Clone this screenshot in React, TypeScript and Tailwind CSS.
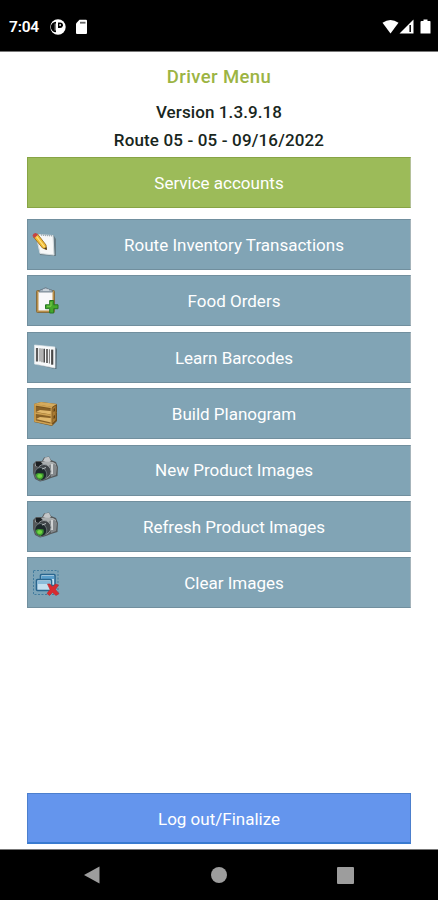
import type { ReactNode } from 'react';

function NotepadIcon() {
  return (
    <svg width="28" height="28" viewBox="0 0 28 28">
      <path d="M5 4 L22 5 L24 8 L24 25 L8 24 Z" fill="#667a83" />
      <path d="M4 3.5 L21 4.5 L22 24 L8 22.5 Z" fill="#f7f8f8" stroke="#d5dcdf" />
      <path d="M9 4 L22 5" stroke="#9ba9b0" strokeWidth="1.5" strokeDasharray="1 1" />
      <path d="M1.5 6 L5.5 3 L14 14 L14.5 18.5 L10.5 17 Z" fill="#f2bd35" stroke="#9c6c20" strokeWidth=".9" />
      <path d="M4.5 5.5 L12.5 16" stroke="#ffe58b" strokeWidth="1.2" />
      <path d="M.5 5 Q1 2 4 2 L6 3.7 L2.5 7 Z" fill="#c64442" />
      <path d="M12 17.3 L14.5 16.3 L14.7 19 Z" fill="#443827" />
    </svg>
  );
}

function ClipboardIcon() {
  return (
    <svg width="28" height="28" viewBox="0 0 28 28">
      <rect x="4.5" y="3.5" width="18" height="22" rx="1" fill="#b9904b" stroke="#836c42" />
      <path d="M6.5 5 H20.5 V23.5 H6.5 Z" fill="#f8f8fa" />
      <path d="M7 5 L8 3 L11 2 Q14 -1 16 2 L20 3 L20.5 5 Z" fill="#a7b3bf" stroke="#637382" strokeWidth=".8" />
      <path d="M11 3 H17" stroke="#e7edf0" />
      <path d="M17.7 13.5 H21.7 V17.8 H26 V21.7 H21.7 V26 H17.7 V21.7 H13.5 V17.8 H17.7 Z" fill="#45a82b" stroke="#267623" strokeWidth="1" />
      <path d="M19 15 V19.2 H15" stroke="#7fd04f" fill="none" />
    </svg>
  );
}

function BarcodeIcon() {
  return (
    <svg width="28" height="28" viewBox="0 0 28 28">
      <path d="M4 3 L24 4.5 L25 7 L24.5 26 L21 25.5 L4 21.5 Z" fill="#586c78" />
      <path d="M2.5 2 L23 4 V25 L2.5 21 Z" fill="#f7f9fa" stroke="#dce4e8" strokeWidth=".7" />
      <path d="M5 5 V18.5" stroke="#5b5b5b" strokeWidth="2.2" />
      <path d="M8 5.3 V18.5 M10 5.5 V19.2" stroke="#858585" strokeWidth="1.2" />
      <path d="M12.2 5.7 V19.5 M15 6 V20" stroke="#4b4b4b" strokeWidth="1.6" />
      <path d="M17.4 6.3 V20.5" stroke="#777" />
      <path d="M20.2 6.6 V21.7" stroke="#484848" strokeWidth="2.2" />
    </svg>
  );
}

function ShelfIcon() {
  return (
    <svg width="28" height="28" viewBox="0 0 28 28">
      <path d="M2 4 L9 2 L25 4 V21 L20 26 L2 22 Z" fill="#73511f" />
      <path d="M2 4 L9 2 L25 4 L20 7 Z" fill="#d5ab5d" />
      <path d="M4 6.5 L19 9 V23.5 L4 20.5 Z" fill="#886127" />
      <path d="M4 12 L8 10 L23 11.5 L19 14.5 Z M4 19 L8 17 L23 18.5 L19 22.5 Z" fill="#e1b86c" />
      <path d="M3 4.7 V21 L19.5 24.5 V7.5 Z M3 13 L19.5 15.5 L24 12" fill="none" stroke="#cfa253" strokeWidth="1.7" />
      <path d="M24 5 V20 L20 24 V8 Z" fill="#a97a32" stroke="#6b4a1d" strokeWidth=".6" />
      <path d="M21.5 9 L23 8 V11 L21.5 12 Z M21.5 16 L23 15 V18 L21.5 19 Z" fill="#624416" />
    </svg>
  );
}

function CameraIcon() {
  return (
    <svg width="28" height="28" viewBox="0 0 28 28">
      <path d="M1 8 L4 5 L10 5 L12 1.5 L17 .5 L19 4 L24 6 L26 11 L25.5 20 L19 22 L14 24 L8 25.5 L3 23 L1 17 Z" fill="#54585a" />
      <path d="M11 5 L13 1.5 L17 .8 L19 5 L16 7 Z" fill="#c3c6c8" />
      <path d="M4 7 L11 5.5 L21 6 L24 8 L24 12 L16 11 L8 12 L3 10 Z" fill="#aaaeaf" />
      <path d="M4 6 L9 6 L11.5 9 L8 12 L4 10 Z" fill="#1b1f22" />
      <path d="M17 9 L23 8 L25 11 L24 19 L19 21 Z" fill="#83888b" />
      <path d="M20 8 V18" stroke="#d0d3d4" strokeWidth="2" />
      <circle cx="12" cy="15.5" r="7" fill="#3e4347" stroke="#969c9f" />
      <ellipse cx="8.8" cy="18" rx="5.9" ry="6.5" transform="rotate(-25 8.8 18)" fill="#1d282b" stroke="#626b70" />
      <path d="M3.5 18.5 Q5 16.5 7 17 L11.5 17.5 Q12.5 22 8.5 24 Q4 22.8 3.5 18.5 Z" fill="#3e9b31" />
      <ellipse cx="7.7" cy="20" rx="2.5" ry="1.9" fill="#72d343" />
      <path d="M10 13 L14 11.5" stroke="#b7bec0" />
    </svg>
  );
}

function ClearIcon() {
  return (
    <svg width="28" height="28" viewBox="0 0 28 28">
      <rect x="1.5" y="1.5" width="24.5" height="24" fill="#68a5ca" fillOpacity=".18" stroke="#437c9e" strokeDasharray="2 1.5" />
      <rect x="8.5" y="5.5" width="14.5" height="11" rx="1" fill="#c8e3f3" stroke="#28658e" strokeWidth="1.6" />
      <path d="M9.5 7 H22 V10 H9.5 Z" fill="#5b9fcb" />
      <rect x="4.5" y="10.5" width="15" height="11" rx="1" fill="#c4dfef" stroke="#28658e" strokeWidth="1.6" />
      <path d="M5.5 12 H18.5 V15 H5.5 Z" fill="#8abbd9" />
      <path d="M15.5 15 L18 15 L20.5 18 L23.5 15 L26.5 16 L23.5 20.5 L27 24.7 L24 26.5 L20.5 23.5 L17.5 26.5 L15 24.5 L18 20.5 Z" fill="#d82b30" stroke="#b92a2d" strokeWidth=".6" />
    </svg>
  );
}

const items: { label: string; icon: ReactNode }[] = [
  { label: 'Route Inventory Transactions', icon: <NotepadIcon /> },
  { label: 'Food Orders', icon: <ClipboardIcon /> },
  { label: 'Learn Barcodes', icon: <BarcodeIcon /> },
  { label: 'Build Planogram', icon: <ShelfIcon /> },
  { label: 'New Product Images', icon: <CameraIcon /> },
  { label: 'Refresh Product Images', icon: <CameraIcon /> },
  { label: 'Clear Images', icon: <ClearIcon /> },
];

function StatusBar() {
  return (
    <header className="flex h-[52px] shrink-0 items-center border-b border-[#777] bg-black pt-[3px] text-white">
      <span className="ml-[9px] w-[41px] pt-px text-[15.5px] font-semibold leading-none tracking-[-0.2px]">7:04</span>
      <svg width="16" height="16" viewBox="0 0 16 16">
        <circle cx="8" cy="8" r="7.7" fill="white" />
        <path d="M6 2.8 A5.2 5.2 0 0 0 6 13.2 Z" fill="black" />
        <path d="M5.2 4.5 V11.5" stroke="white" strokeWidth=".7" />
        <path d="M8 3.5 H10 A3 3 0 0 1 13 6.5 Q12.5 9 10 9 H8 Z" fill="black" />
        <path d="M9.3 5.2 H11 V6.7 H9.3 Z" fill="white" />
      </svg>
      <svg className="ml-[9px]" width="13" height="16" viewBox="0 0 13 16">
        <path d="M4.5 .8 H11 Q12 .8 12 2 V14 Q12 15 11 15 H2 Q1 15 1 14 V4.5 Z" fill="white" />
        <path d="M5 3.7 H10.5" stroke="#666" strokeWidth="1.8" />
      </svg>
      <svg className="ml-auto" width="17" height="16" viewBox="0 0 17 16">
        <path d="M.5 3.8 Q8.5 -2 16.5 3.8 L8.5 14.5 Z" fill="white" />
      </svg>
      <svg width="15" height="16" viewBox="0 0 15 16">
        <path d="M.5 14.5 L14.5 .5 V14.5 Z" fill="white" />
        <path d="M11.2 6 V13" stroke="#111" strokeWidth="1.6" />
      </svg>
      <svg className="ml-[6px] mr-[7px]" width="11" height="16" viewBox="0 0 11 16">
        <path d="M3.5 .5 H7.5 V2 H10 Q10.5 2 10.5 3 V14.5 H.5 V3 Q.5 2 1.5 2 H3.5 Z" fill="white" />
      </svg>
    </header>
  );
}

export default function App() {
  return (
    <div className="flex h-[900px] w-[438px] flex-col overflow-hidden bg-white font-[Roboto,sans-serif]">
      <StatusBar />
      <main className="flex flex-1 flex-col px-[27px]">
        <div className="flex flex-col items-center whitespace-nowrap text-[#182620]">
          <h1 className="mt-[12px] text-[18.5px] font-medium leading-[26px] tracking-[0.4px] text-[#9cb443]">Driver Menu</h1>
          <p className="mt-[8px] text-[17px] font-medium leading-[28px] tracking-[0.1px]">Version 1.3.9.18</p>
          <p className="text-[17px] font-medium leading-[28px] tracking-[0.15px]">Route 05 - 05 - 09/16/2022</p>
        </div>
        <button className="mt-[3px] h-[51px] shrink-0 border border-[#87a445] border-r-[#b5c19a] bg-[#9cbb59] pt-[2px] text-[17px] text-white">
          Service accounts
        </button>
        <nav className="mt-[11px] flex flex-col gap-[5.4px]">
          {items.map((item) => (
            <button
              key={item.label}
              className="flex h-[51px] shrink-0 items-center border border-[#718f9e] border-r-[#a6b4bb] bg-[#81a4b5] pl-[4px] text-[17px] text-white"
            >
              {item.icon}
              <span className="flex-1 pr-[2px] pt-[2px]">{item.label}</span>
            </button>
          ))}
        </nav>
        <button className="mb-[5px] mt-auto h-[51px] shrink-0 border border-[#4c7fcd] border-b-2 border-b-[#397bd0] bg-[#6495ed] pt-[3px] text-[17px] text-white">
          Log out/Finalize
        </button>
      </main>
      <footer className="flex h-[51px] shrink-0 items-center border-t border-[#777] bg-black">
        <svg className="ml-[84px]" width="16" height="18" viewBox="0 0 16 18">
          <path d="M0 9 L15.5 .5 V17.5 Z" fill="#9d9d9d" />
        </svg>
        <div className="ml-[111px] size-4 rounded-full bg-[#9d9d9d]" />
        <div className="ml-[110px] size-[17px] rounded-[1px] bg-[#9d9d9d]" />
      </footer>
    </div>
  );
}
